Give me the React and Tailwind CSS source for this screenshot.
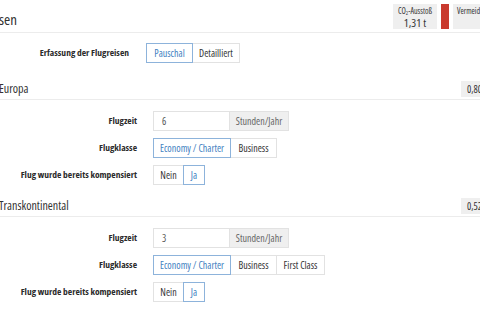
import { useState } from "react";

const font = { fontFamily: '"Open Sans", "Noto Sans", sans-serif' };

const widths = {
  Pauschal: "w-[47px]",
  Detailliert: "w-[48px]",
  "Economy / Charter": "w-[78px]",
  Business: "w-[47px]",
  "First Class": "w-[49px]",
  Nein: "w-[31px]",
  Ja: "w-[22px]",
};

function Segmented({ options, value, onChange }) {
  return (
    <div className="flex h-[20px]">
      {options.map((opt, i) => {
        const active = opt === value;
        return (
          <button
            key={opt}
            onClick={() => onChange(opt)}
            className={
              "h-[20px] text-[10px] leading-none border whitespace-nowrap text-center " +
              widths[opt] +
              (i > 0 ? " -ml-px" : "") +
              (active
                ? " relative z-10 border-[#8db3db] text-[#3f7fbf] bg-white"
                : " border-[#e2e2e2] text-[#333] bg-white")
            }
          >
            {opt}
          </button>
        );
      })}
    </div>
  );
}

function Row({ label, children }) {
  return (
    <div className="flex items-center h-[20px]">
      <div className="w-[137px] text-right text-[9.5px] font-bold text-[#2b2b2b] whitespace-nowrap">
        {label}
      </div>
      <div className="ml-[16px]">{children}</div>
    </div>
  );
}

function Section({ title, total, hours, classes }) {
  const [klasse, setKlasse] = useState("Economy / Charter");
  const [komp, setKomp] = useState("Ja");
  return (
    <div>
      <div className="flex items-center justify-between h-[21px] border-b border-[#ececec]">
        <span className="-ml-[1px] text-[12px] text-[#333]">{title}</span>
        <span className="bg-[#efefef] text-[10px] text-[#333] h-[16px] leading-[16px] pl-[6px] w-[19px] overflow-hidden whitespace-nowrap">
          {total}
        </span>
      </div>
      <div className="flex flex-col gap-[7px] pt-[11px] pb-[11px]">
        <Row label="Flugzeit">
          <div className="flex h-[20px] text-[10px]">
            <div className="w-[77px] border border-[#e2e2e2] pl-[8px] flex items-center text-[#555]">
              {hours}
            </div>
            <div className="w-[60px] -ml-px border border-[#e2e2e2] bg-[#efefef] flex items-center justify-center text-[#666]">
              Stunden/Jahr
            </div>
          </div>
        </Row>
        <Row label="Flugklasse">
          <Segmented options={classes} value={klasse} onChange={setKlasse} />
        </Row>
        <Row label="Flug wurde bereits kompensiert">
          <Segmented options={["Nein", "Ja"]} value={komp} onChange={setKomp} />
        </Row>
      </div>
    </div>
  );
}

export default function App() {
  const [mode, setMode] = useState("Pauschal");
  return (
    <div
      className="w-[480px] h-[320px] overflow-hidden bg-white font-stretch-condensed"
      style={font}
    >
      <div className="flex justify-between h-[33px] border-b border-[#ececec]">
        <span className="-ml-[36px] mt-[9px] text-[15px] leading-[20px] text-[#333]">
          Flugreisen
        </span>
        <div className="flex gap-[4px] pt-[4px]">
          <div className="w-[44px] h-[25px] bg-[#efefef] flex flex-col items-center text-[#333]">
            <span className="text-[8px] leading-[10px] mt-[2px] whitespace-nowrap">
              CO<sub className="text-[5.5px] align-baseline">2</sub>-Ausstoß
            </span>
            <span className="text-[11.5px] leading-[13px]">1,31 t</span>
          </div>
          <div className="w-[8px] h-[25px] bg-[#c93a2e]" />
          <div className="w-[27px] h-[25px] bg-[#efefef] overflow-hidden text-[#333]">
            <span className="block text-[8px] leading-[10px] mt-[2px] pl-[4px] whitespace-nowrap">
              Vermeidung
            </span>
          </div>
        </div>
      </div>
      <div className="flex items-center h-[20px] mt-[10px]">
        <div className="w-[129px] text-right text-[9.5px] font-bold text-[#2b2b2b]">
          Erfassung der Flugreisen
        </div>
        <div className="ml-[17px]">
          <Segmented options={["Pauschal", "Detailliert"]} value={mode} onChange={setMode} />
        </div>
      </div>
      <div className="mt-[16px]">
        <Section
          title="Europa"
          total="0,80 t"
          hours="6"
          classes={["Economy / Charter", "Business"]}
        />
        <Section
          title="Transkontinental"
          total="0,52 t"
          hours="3"
          classes={["Economy / Charter", "Business", "First Class"]}
        />
      </div>
    </div>
  );
}
